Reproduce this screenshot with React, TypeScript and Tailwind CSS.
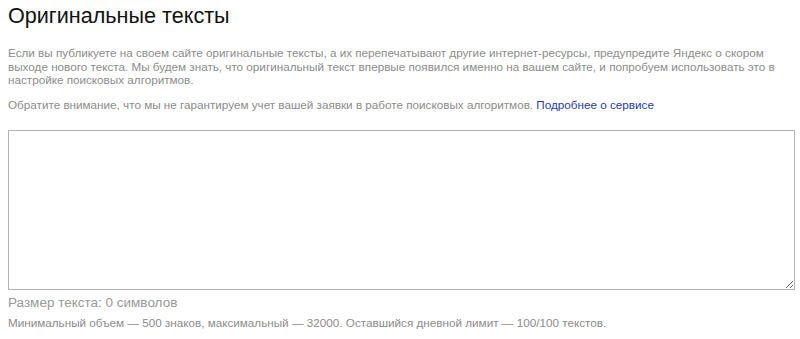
export default function App() {
  return (
    <div className="w-[800px] h-[339px] bg-white px-2 pt-[2.5px] font-['Liberation_Sans',Arial,sans-serif] overflow-hidden">
      <h1 className="text-[21.6px] leading-[25px] text-[#111] font-normal">Оригинальные тексты</h1>
      <p className="mt-[18.75px] text-[11.7px] leading-[13.5px] text-[#8c8c8c] pr-[10px]">
        Если вы публикуете на своем сайте оригинальные тексты, а их перепечатывают другие интернет-ресурсы, предупредите Яндекс о скором выходе нового текста. Мы будем знать, что оригинальный текст впервые появился именно на вашем сайте, и попробуем использовать это в настройке поисковых алгоритмов.
      </p>
      <p className="mt-[11.5px] text-[11.7px] leading-[13.5px] text-[#8c8c8c]">
        Обратите внимание, что мы не гарантируем учет вашей заявки в работе поисковых алгоритмов.{' '}
        <a href="#" className="text-[#1f3aa8]">Подробнее о сервисе</a>
      </p>
      <textarea className="mt-[18.25px] block w-[787px] h-[160px] border border-[#b3b3b3] bg-white outline-none" />
      <div className="mt-[5px] text-[13.5px] leading-[16px] text-[#999]">Размер текста: 0 символов</div>
      <div className="mt-[4.75px] text-[11.7px] leading-[13.5px] text-[#8c8c8c]">
        Минимальный объем — 500 знаков, максимальный — 32000. Оставшийся дневной лимит — 100/100 текстов.
      </div>
    </div>
  );
}
